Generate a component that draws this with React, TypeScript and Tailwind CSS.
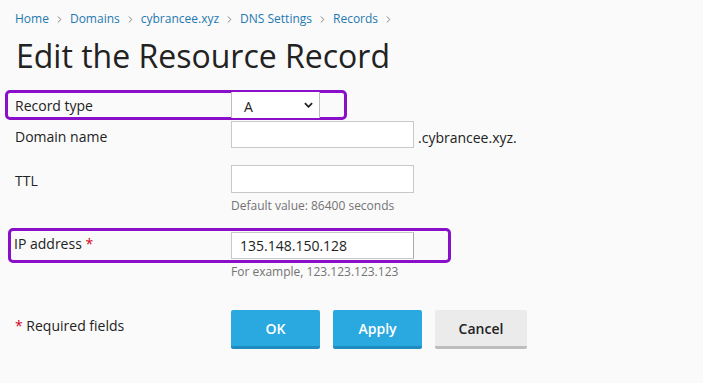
import { ChevronRight } from "lucide-react";

const crumbs = ["Home", "Domains", "cybrancee.xyz", "DNS Settings", "Records"];

export default function App() {
  return (
    <div className="min-h-screen w-full bg-[#fafafa] text-[#222] font-['Open_Sans',sans-serif] px-[15px] pt-[10px]">
      {/* Breadcrumbs */}
      <nav className="flex items-center text-[12px] text-[#1f79b0] h-[18px]">
        {crumbs.map((c) => (
          <span key={c} className="flex items-center">
            <span>{c}</span>
            <ChevronRight size={11} strokeWidth={2} className="mx-[5px] text-[#777]" />
          </span>
        ))}
      </nav>

      <h1 className="text-[32px] leading-[40px] mt-[8px] ml-[1px] text-[#222]">
        Edit the Resource Record
      </h1>

      <form className="mt-[14px] text-[14px]">
        {/* Record type */}
        <div className="relative flex items-center h-[30px] px-[10px] border-[3px] border-[#8a0fc9] rounded-[5px] w-[342px] -ml-[10px]">
          <label className="w-[216px] -ml-[3px] -mt-[4px] mt-[1px]">Record type</label>
          <div className="relative w-[89px] h-[26px] bg-white border border-[#bdbdbd] border-y-0 flex items-center pl-[12px]">
            <span className="mt-[2px]">A</span>
            <svg viewBox="0 0 10 6" className="absolute right-[6px] top-[10px] w-[9px] h-[6px]">
              <path d="M1 1l4 4 4-4" fill="none" stroke="#222" strokeWidth="2" />
            </svg>
          </div>
        </div>

        {/* Domain name */}
        <div className="flex items-start mt-[1px]">
          <label className="w-[216px] pt-[5px]">Domain name</label>
          <input className="w-[183px] h-[27px] bg-white border border-[#c8c8c8] outline-none" />
          <span className="ml-[4px] pt-[6px]">.cybrancee.xyz.</span>
        </div>

        {/* TTL */}
        <div className="flex items-start mt-[17px]">
          <label className="w-[216px] pt-[5px]">TTL</label>
          <div>
            <input className="w-[183px] h-[28px] bg-white border border-[#c8c8c8] outline-none" />
            <div className="text-[12px] text-[#737373] mt-[5px] leading-[16px]">Default value: 86400 seconds</div>
          </div>
        </div>

        {/* IP address */}
        <div className="flex items-center h-[35px] mt-[14px] border-[3px] border-[#8a0fc9] rounded-[5px] w-[443px] -ml-[7px]">
          <label className="w-[216px] ml-[3px] -mt-[4px]">
            IP address <span className="text-[#d0021b]">*</span>
          </label>
          <input
            defaultValue="135.148.150.128"
            className="w-[183px] h-[27px] ml-[1px] bg-white border border-[#c8c8c8] border-r-[#aaa] outline-none px-[8px] text-[14px] text-[#222]"
          />
        </div>
        <div className="ml-[216px] text-[12px] text-[#737373] mt-[1px] leading-[16px]">
          For example, 123.123.123.123
        </div>

        {/* Footer */}
        <div className="flex items-start mt-[30px]">
          <div className="w-[216px] pt-[5px]">
            <span className="text-[#d0021b]">*</span> Required fields
          </div>
          <div className="flex gap-[13px]">
            <button type="button" className="w-[89px] h-[39px] bg-[#29a9df] border-b-[3px] border-[#1e8cc0] rounded-[2px] text-white font-semibold text-[14px]">
              OK
            </button>
            <button type="button" className="w-[89px] h-[39px] bg-[#29a9df] border-b-[3px] border-[#1e8cc0] rounded-[2px] text-white font-semibold text-[14px]">
              Apply
            </button>
            <button type="button" className="w-[92px] h-[39px] bg-[#ebebeb] border-b-[3px] border-[#bdbdbd] rounded-[2px] text-[#222] font-semibold text-[14px]">
              Cancel
            </button>
          </div>
        </div>
      </form>
    </div>
  );
}
